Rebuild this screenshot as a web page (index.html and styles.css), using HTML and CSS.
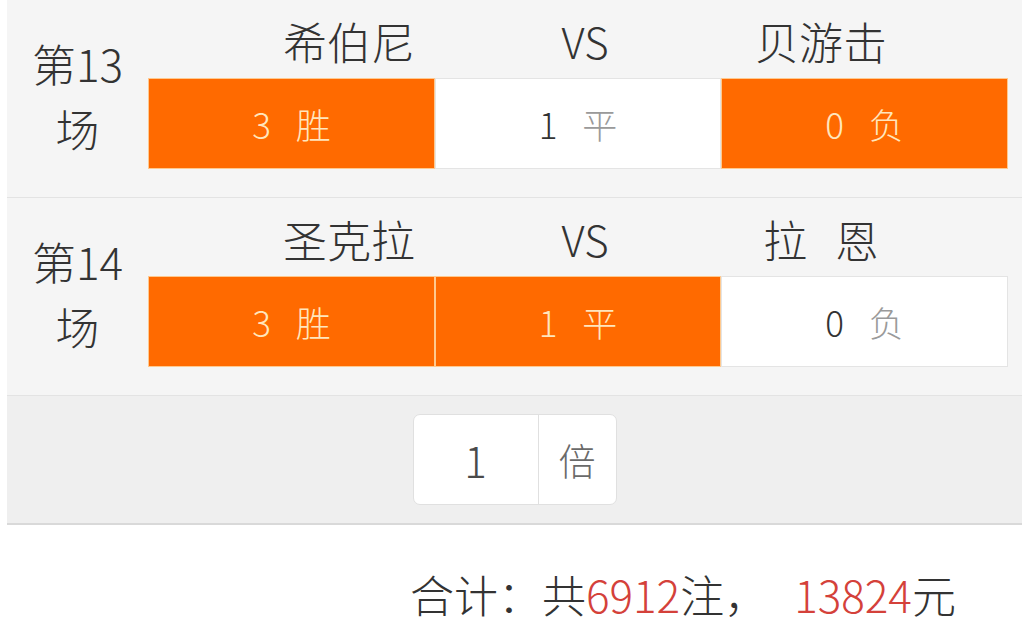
FILE: index.html
```html
<!DOCTYPE html>
<html lang="zh">
<head>
<meta charset="utf-8">
<title>投注确认</title>
<link rel="stylesheet" href="styles.css">
</head>
<body>
<div class="panel">
  <div class="match">
    <div class="label">第13<br>场</div>
    <div class="names">
      <span class="name">希伯尼</span>
      <span class="name vs">VS</span>
      <span class="name">贝游击</span>
    </div>
    <div class="cells">
      <div class="cell on"><span class="num">3</span><span class="res">胜</span></div>
      <div class="cell"><span class="num">1</span><span class="res">平</span></div>
      <div class="cell on"><span class="num">0</span><span class="res">负</span></div>
    </div>
  </div>
  <div class="match">
    <div class="label">第14<br>场</div>
    <div class="names">
      <span class="name">圣克拉</span>
      <span class="name vs">VS</span>
      <span class="name wide">拉 恩</span>
    </div>
    <div class="cells">
      <div class="cell on"><span class="num">3</span><span class="res">胜</span></div>
      <div class="cell on"><span class="num">1</span><span class="res">平</span></div>
      <div class="cell"><span class="num">0</span><span class="res">负</span></div>
    </div>
  </div>
  <div class="multi">
    <div class="mbox">
      <div class="mval">1</div>
      <div class="munit">倍</div>
    </div>
  </div>
</div>
<div class="total">合计：共<span class="red">6912</span>注，<span class="red sum">13824</span>元</div>
</body>
</html>
```

FILE: styles.css
```css
* { box-sizing: border-box; }

html, body {
  min-height: 100vh;
}

body {
  margin: 0;
  background: #ffffff;
  font-family: "Noto Sans CJK SC", "Noto Sans", sans-serif;
  font-weight: 300;
  color: #333333;
}

.panel {
  margin-left: 7px;
  width: 1015px;
}

.match {
  display: grid;
  grid-template-columns: 141px 860px;
  grid-template-rows: 78px 91px;
  padding-bottom: 28px;
  background: #f5f5f5;
  border-bottom: 1px solid #e3e3e3;
}

.label {
  grid-row: 1 / span 2;
  grid-column: 1;
  padding-top: 31px;
  text-align: center;
  font-size: 44px;
  line-height: 65px;
  color: #333333;
}

.names {
  grid-row: 1;
  grid-column: 2;
  display: flex;
  align-items: center;
  padding-left: 83px;
  padding-top: 4px;
}

.name {
  width: 236px;
  text-align: center;
  font-size: 44px;
  line-height: 1;
  color: #333333;
}

.name.vs {
  font-size: 42px;
}

.name.wide {
  word-spacing: 18px;
}

.cells {
  grid-row: 2;
  grid-column: 2;
  display: grid;
  grid-template-columns: 287px 286px 287px;
}

.cell {
  display: flex;
  align-items: center;
  justify-content: center;
  background: #ffffff;
  border: 1px solid #e4e4e4;
  font-size: 35px;
}

.cell .num {
  color: #333333;
  margin-right: 25px;
}

.cell .res {
  color: #9a9a9a;
}

.cell.on {
  background: #ff6a00;
  border-color: #ffc98e;
}

.cell.on .num,
.cell.on .res {
  color: #ffe6bd;
}

.multi {
  height: 129px;
  background: #efefef;
  border-bottom: 2px solid #d9d9d9;
  display: flex;
  justify-content: center;
  align-items: center;
}

.mbox {
  display: flex;
  width: 204px;
  height: 91px;
  background: #ffffff;
  border: 1px solid #e0e0e0;
  border-radius: 7px;
}

.mval {
  width: 125px;
  display: flex;
  align-items: center;
  justify-content: center;
  font-size: 42px;
  color: #4a4a4a;
  border-right: 1px solid #e0e0e0;
}

.munit {
  flex: 1;
  display: flex;
  align-items: center;
  justify-content: center;
  font-size: 37px;
  color: #6a6a6a;
}

.total {
  margin-top: 47px;
  padding-left: 410px;
  padding-bottom: 8px;
  font-size: 44px;
  line-height: 44px;
  color: #333333;
}

.red {
  color: #d4413a;
}

.red.sum {
  margin-left: 26px;
}
```
